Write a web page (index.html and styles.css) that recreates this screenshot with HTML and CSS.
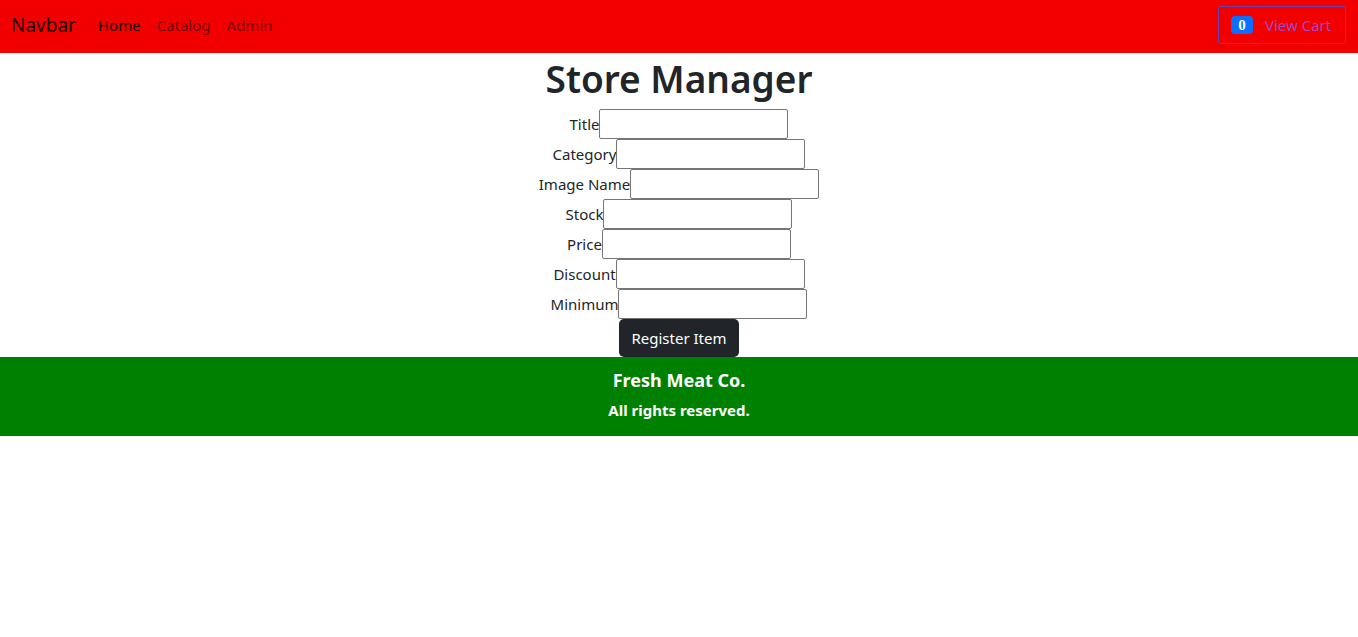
FILE: index.html
```html
<!DOCTYPE html>
<html lang="en">
<head>
<meta charset="utf-8">
<title>Store Manager</title>
<link rel="stylesheet" href="styles.css">
</head>
<body>
<nav class="navbar">
  <div class="nav-left">
    <span class="brand">Navbar</span>
    <a class="nav-link active" href="#">Home</a>
    <a class="nav-link" href="#">Catalog</a>
    <a class="nav-link" href="#">Admin</a>
  </div>
  <button class="cart-btn"><span class="badge">0</span><span class="cart-text">View Cart</span></button>
</nav>
<main class="manager">
  <h1 class="title">Store Manager</h1>
  <div class="row"><label>Title</label><input type="text"></div>
  <div class="row"><label>Category</label><input type="text"></div>
  <div class="row"><label>Image Name</label><input type="text"></div>
  <div class="row"><label>Stock</label><input type="text"></div>
  <div class="row"><label>Price</label><input type="text"></div>
  <div class="row"><label>Discount</label><input type="text"></div>
  <div class="row"><label>Minimum</label><input type="text"></div>
  <div class="row"><button class="register">Register Item</button></div>
</main>
<footer class="footer">
  <div class="company">Fresh Meat Co.</div>
  <div class="rights">All rights reserved.</div>
</footer>
</body>
</html>
```
FILE: styles.css
```css
* { box-sizing: border-box; }
body {
  margin: 0;
  font-family: "Noto Sans", "Open Sans", sans-serif;
  font-size: 16px;
  color: #212529;
  background: #fff;
}
.navbar {
  height: 53px;
  background: #f20000;
  display: flex;
  align-items: center;
  justify-content: space-between;
  padding: 0 12px 3px 11px;
}
.nav-left { display: flex; align-items: center; }
.brand {
  font-size: 19px;
  color: rgba(0,0,0,0.9);
  margin-right: 22px;
}
.nav-link {
  font-size: 15px;
  color: rgba(0,0,0,0.55);
  text-decoration: none;
  margin-right: 16px;
}
.nav-link.active { color: rgba(0,0,0,0.9); }
.cart-btn {
  height: 38px;
  width: 128px;
  border: 1px solid #6a3fb0;
  border-radius: 2px;
  background: transparent;
  display: flex;
  align-items: center;
  padding: 0 0 0 12px;
  font-family: inherit;
  font-size: 15px;
}
.badge {
  width: 22px;
  height: 18px;
  border-radius: 4px;
  background: #0d6efd;
  color: #fff;
  font-family: "Liberation Serif", serif;
  font-weight: bold;
  font-size: 15px;
  display: flex;
  align-items: center;
  justify-content: center;
  margin-right: 12px;
}
.cart-text { color: #a844c8; }
.manager {
  display: flex;
  flex-direction: column;
  align-items: center;
}
.title {
  margin: 0 0 8px;
  height: 48px;
  line-height: 52px;
  font-size: 37px;
  font-weight: 600;
}
.row {
  height: 30px;
  display: flex;
  align-items: center;
  justify-content: center;
}
.row label { font-size: 15px; }
.row input {
  width: 189px;
  height: 30px;
  border: 1px solid #767676;
  border-radius: 2px;
  padding: 1px 2px;
  font-family: inherit;
}
.row:last-child { height: 38px; }
.register {
  height: 38px;
  width: 120px;
  background: #212529;
  color: #fff;
  border: none;
  border-radius: 5px;
  font-family: inherit;
  font-size: 15px;
  padding: 0;
}
.footer {
  background: #008000;
  color: #fff;
  height: 79px;
  text-align: center;
  font-weight: bold;
  padding-top: 11px;
}
.company { font-size: 18px; line-height: 24px; margin-bottom: 6px; }
.rights { font-size: 15px; line-height: 24px; }
```
